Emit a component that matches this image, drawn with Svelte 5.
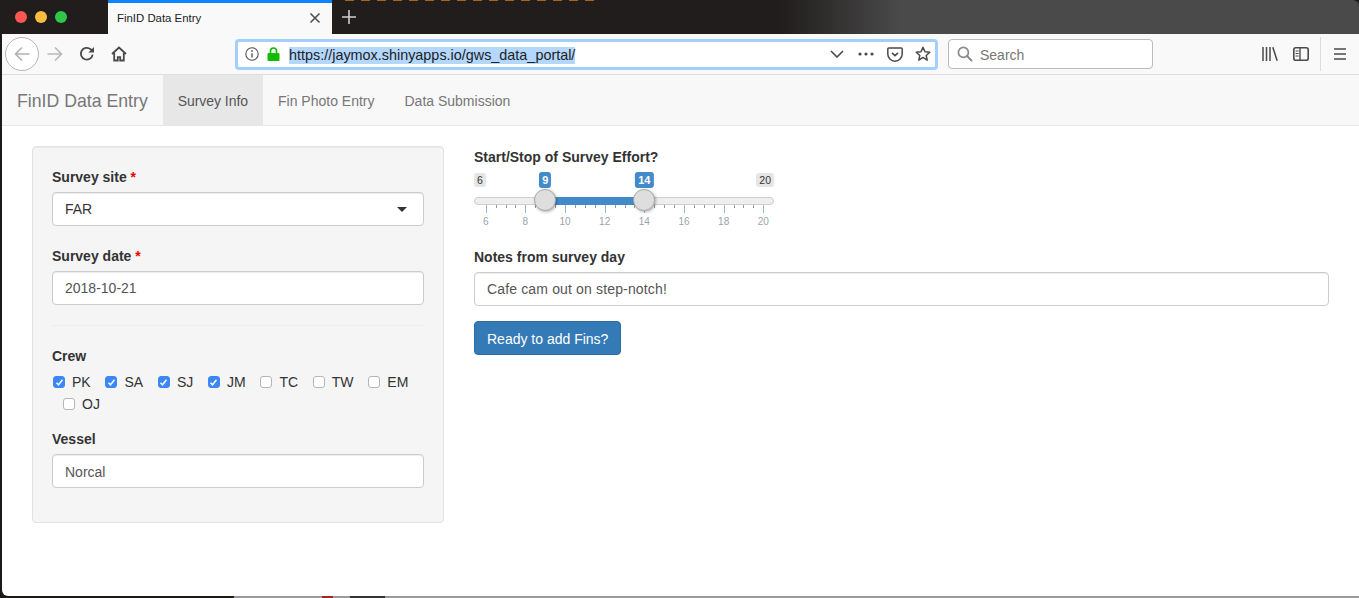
<script>
  const crew = [
    { id: 'PK', on: true },
    { id: 'SA', on: true },
    { id: 'SJ', on: true },
    { id: 'JM', on: true },
    { id: 'TC', on: false },
    { id: 'TW', on: false },
    { id: 'EM', on: false },
    { id: 'OJ', on: false }
  ]

  const nav = ['Survey Info', 'Fin Photo Entry', 'Data Submission']

  // slider scale, hours to px inside the 300px wide track
  const x = (v) => 11.7 + (v - 6) * 19.83
  const from = 9
  const to = 14

  const ticks = []
  for (let v = 6; v <= 20; v += 0.5) ticks.push(v)
  const majors = ticks.filter((v) => v % 2 === 0)
</script>

<div class="screen">
  <header class="titlebar">
    <div class="lights">
      <span class="light red"></span>
      <span class="light yellow"></span>
      <span class="light green"></span>
    </div>
    <div class="tab">
      <span class="tab-title">FinID Data Entry</span>
      <svg class="tab-close" width="12" height="12" viewBox="0 0 12 12"><path d="M1.5 1.5l9 9M10.5 1.5l-9 9" stroke="#4a4a4a" stroke-width="1.5" fill="none"/></svg>
    </div>
    <svg class="tab-new" width="14" height="14" viewBox="0 0 14 14"><path d="M7 0v14M0 7h14" stroke="#cfcfcf" stroke-width="1.6" fill="none"/></svg>
  </header>

  <div class="window">
    <div class="toolbar">
      <div class="back">
        <svg width="16" height="16" viewBox="0 0 16 16"><path d="M15.5 8H1.5M8 1.5L1.5 8 8 14.5" stroke="#b3b3b3" stroke-width="1.7" fill="none"/></svg>
      </div>
      <svg class="fwd" width="16" height="16" viewBox="0 0 16 16"><path d="M.5 8h14M8 1.5L14.5 8 8 14.5" stroke="#b9b9b9" stroke-width="1.7" fill="none"/></svg>
      <svg class="reload" width="16" height="16" viewBox="0 0 16 16"><path d="M13.6 8.6A5.9 5.9 0 1 1 11.6 3.2L14 5.2" stroke="#4a4a4a" stroke-width="1.8" fill="none"/><path d="M15 1v5.6H9.4z" fill="#4a4a4a"/></svg>
      <svg class="home" width="16" height="16" viewBox="0 0 16 16"><path d="M1 8l7-6.5L15 8M3.2 7v7.5h3.6v-3.4h2.4v3.4h3.6V7" stroke="#4a4a4a" stroke-width="1.8" fill="none"/></svg>

      <div class="urlbar">
        <svg class="info" width="14" height="14" viewBox="0 0 14 14"><circle cx="7" cy="7" r="6.2" stroke="#555" stroke-width="1.1" fill="none"/><path d="M7 6.2v4.2" stroke="#555" stroke-width="1.4"/><circle cx="7" cy="4" r=".9" fill="#555"/></svg>
        <svg class="lock" width="13" height="14" viewBox="0 0 13 14"><path d="M3.5 6V4a3 3 0 0 1 6 0v2" stroke="#12bc00" stroke-width="1.7" fill="none"/><rect x=".5" y="6" width="12" height="8" rx="1" fill="#12bc00"/></svg>
        <span class="url">https://jaymox.shinyapps.io/gws_data_portal/</span>
        <svg class="chev" width="14" height="8" viewBox="0 0 14 8"><path d="M1 1l6 6 6-6" stroke="#4a4a4a" stroke-width="1.6" fill="none"/></svg>
        <svg class="dots" width="16" height="4" viewBox="0 0 16 4"><circle cx="2" cy="2" r="1.6" fill="#4a4a4a"/><circle cx="8" cy="2" r="1.6" fill="#4a4a4a"/><circle cx="14" cy="2" r="1.6" fill="#4a4a4a"/></svg>
        <svg class="pocket" width="16" height="15" viewBox="0 0 16 15"><path d="M1.8 1h12.4a1 1 0 0 1 1 1v5a7.2 7.2 0 0 1-14.4 0V2a1 1 0 0 1 1-1z" stroke="#4a4a4a" stroke-width="1.5" fill="none"/><path d="M5 5.8l3 2.8 3-2.8" stroke="#4a4a4a" stroke-width="1.6" fill="none"/></svg>
        <svg class="star" width="16" height="16" viewBox="0 0 16 16"><path d="M8 1.4l2 4.4 4.8.5-3.6 3.2 1 4.7L8 11.4l-4.2 2.8 1-4.7L1.2 6.3 6 5.8z" stroke="#4a4a4a" stroke-width="1.5" stroke-linejoin="round" fill="none"/></svg>
      </div>

      <div class="searchbar">
        <svg width="16" height="16" viewBox="0 0 16 16"><circle cx="6.4" cy="6.4" r="5" stroke="#8a8a8a" stroke-width="1.7" fill="none"/><path d="M10 10l5 5" stroke="#8a8a8a" stroke-width="1.9"/></svg>
        <span class="search-text">Search</span>
      </div>

      <svg class="library" width="16" height="14" viewBox="0 0 16 14"><path d="M1 0v14M4.5 0v14M8 0v14M10.8.2l4.4 13.6" stroke="#4a4a4a" stroke-width="1.5" fill="none"/></svg>
      <svg class="sidebar" width="16" height="14" viewBox="0 0 16 14"><rect x=".8" y=".8" width="14.4" height="12.4" rx="2" stroke="#4a4a4a" stroke-width="1.6" fill="none"/><path d="M7 1v12" stroke="#4a4a4a" stroke-width="1.4"/><path d="M2.6 4h3M2.6 6.5h3M2.6 9h3" stroke="#4a4a4a" stroke-width="1"/></svg>
      <span class="divider"></span>
      <svg class="burger" width="12" height="12" viewBox="0 0 12 12"><path d="M0 1h12M0 6h12M0 11h12" stroke="#4a4a4a" stroke-width="1.5" fill="none"/></svg>
    </div>

    <nav class="navbar">
      <span class="brand">FinID Data Entry</span>
      {#each nav as item, i}
        <span class="nav-link" class:active={i === 0}>{item}</span>
      {/each}
    </nav>

    <main class="content">
      <section class="panel">
        <div class="group">
          <div class="label">Survey site <span class="req">*</span></div>
          <div class="select">FAR<span class="caret"></span></div>
        </div>
        <div class="group">
          <div class="label">Survey date <span class="req">*</span></div>
          <input class="control" value="2018-10-21" readonly />
        </div>
        <hr />
        <div class="group crew-group">
          <div class="label">Crew</div>
          <div class="checks">
            {#each crew as c}
              <label class="check">
                <span class="box" class:on={c.on}>
                  {#if c.on}
                    <svg width="9" height="9" viewBox="0 0 9 9"><path d="M1.5 4.8l2 2 4-5" stroke="#fff" stroke-width="1.5" fill="none"/></svg>
                  {/if}
                </span>
                {c.id}
              </label>
            {/each}
          </div>
        </div>
        <div class="group last">
          <div class="label">Vessel</div>
          <input class="control vessel" value="Norcal" readonly />
        </div>
      </section>

      <section class="main-col">
        <div class="label">Start/Stop of Survey Effort?</div>
        <div class="slider">
          <span class="badge minmax" style="left:0">6</span>
          <span class="badge minmax" style="right:0">20</span>
          <span class="badge value" style="left:{x(from)}px">{from}</span>
          <span class="badge value" style="left:{x(to)}px">{to}</span>
          <div class="track"></div>
          <div class="bar" style="left:{x(from)}px;width:{x(to) - x(from)}px"></div>
          {#each ticks as t}
            <span class="tick" class:major={t % 2 === 0} style="left:{x(t)}px"></span>
          {/each}
          {#each majors as m}
            <span class="tick-label" style="left:{x(m)}px">{m}</span>
          {/each}
          <span class="handle" style="left:{x(from)}px"></span>
          <span class="handle" style="left:{x(to)}px"></span>
        </div>
        <div class="label">Notes from survey day</div>
        <input class="control notes" value="Cafe cam out on step-notch!" readonly />
        <button class="btn">Ready to add Fins?</button>
      </section>
    </main>
  </div>

  <footer class="desk">
    <span class="desk-dark"></span>
    <span class="desk-red"></span>
    <span class="desk-text"></span>
  </footer>
</div>

<style>
  :global(body) {
    margin: 0;
    background: #1c1a19;
  }

  .screen {
    width: 1359px;
    height: 598px;
    display: flex;
    flex-direction: column;
    overflow: hidden;
    background: #1c1a19;
    font-family: "Liberation Sans", Arial, sans-serif;
    font-size: 14px;
    color: #333;
  }

  /* browser chrome */
  .titlebar {
    height: 34px;
    flex: none;
    display: flex;
    align-items: stretch;
    background:
      repeating-linear-gradient(90deg, #a8631c 0 9px, transparent 9px 16px) 345px 0 / 252px 1px no-repeat,
      linear-gradient(90deg, #201d1c 0, #201d1c 780px, #4a4a4a 900px, #4a4a4a 100%);
    border-top-right-radius: 6px;
  }
  .lights {
    width: 108px;
    display: flex;
    align-items: center;
    gap: 8px;
    padding-left: 15px;
    box-sizing: border-box;
  }
  .light {
    width: 12px;
    height: 12px;
    border-radius: 50%;
  }
  .red { background: #fc5753; }
  .yellow { background: #fdbc40; }
  .green { background: #2fc748; }
  .tab {
    width: 224px;
    background: #f9f9f9;
    border-top: 3px solid #0a84ff;
    box-sizing: border-box;
    display: flex;
    align-items: center;
    padding: 0 11px 2px 9px;
    justify-content: space-between;
  }
  .tab-title {
    font-size: 11.4px;
    color: #222;
  }
  .tab-new {
    margin: 10px 0 0 10px;
  }

  .window {
    flex: 1;
    margin-left: 2px;
    background: #fff;
    border-bottom-left-radius: 6px;
    display: flex;
    flex-direction: column;
    min-height: 0;
  }
  .toolbar {
    height: 41px;
    flex: none;
    box-sizing: border-box;
    background: #f9f9f9;
    border-bottom: 1px solid #dedede;
    display: flex;
    align-items: center;
    padding-left: 3px;
  }
  .back {
    width: 34px;
    height: 34px;
    box-sizing: border-box;
    border: 1px solid #b5b5b5;
    border-radius: 50%;
    background: #fff;
    display: flex;
    align-items: center;
    justify-content: center;
    flex: none;
  }
  .toolbar > svg { flex: none; }
  .fwd { margin-left: 8px; }
  .reload { margin-left: 16px; }
  .home { margin-left: 16px; }
  .urlbar {
    margin-left: 108px;
    width: 703px;
    height: 31px;
    box-sizing: border-box;
    border: 3px solid #a3cfff;
    border-radius: 4px;
    background: #fff;
    display: flex;
    align-items: center;
    padding-left: 7px;
    flex: none;
  }
  .lock { margin-left: 8px; }
  .url {
    margin: 2px 0 0 9px;
    font-size: 14.4px;
    line-height: 17px;
    color: #222;
    background: #b3d7ff;
  }
  .chev { margin-left: auto; }
  .dots { margin-left: 14px; }
  .pocket { margin-left: 13px; }
  .star { margin: 0 4px 0 12px; }
  .searchbar {
    margin-left: 10px;
    width: 205px;
    height: 30px;
    box-sizing: border-box;
    border: 1px solid #bcbcbc;
    border-radius: 4px;
    background: #fff;
    display: flex;
    align-items: center;
    gap: 7px;
    padding-left: 8px;
    color: #777;
    flex: none;
  }
  .search-text { padding-top: 2px; }
  .library { margin-left: 109px; }
  .sidebar { margin-left: 15px; }
  .divider {
    margin-left: 11px;
    width: 1px;
    height: 34px;
    background: #dcdcdc;
    flex: none;
  }
  .burger { margin-left: 13px; }

  /* bootstrap-ish page */
  .navbar {
    height: 51px;
    flex: none;
    box-sizing: border-box;
    background: #f8f8f8;
    border-bottom: 1px solid #e7e7e7;
    display: flex;
    align-items: stretch;
    padding-left: 15px;
  }
  .brand {
    font-size: 17.7px;
    color: #777;
    line-height: 52px;
    margin-right: 15px;
  }
  .nav-link {
    color: #777;
    padding: 0 15px;
    line-height: 52px;
  }
  .nav-link.active {
    background: #e7e7e7;
    color: #555;
    letter-spacing: -.05px;
  }

  .content {
    display: flex;
    padding: 20px 30px 0 30px;
    gap: 30px;
    align-items: flex-start;
  }
  .panel {
    width: 412px;
    flex: none;
    box-sizing: border-box;
    padding: 20px 19px 19px;
    background: #f5f5f5;
    border: 1px solid #e3e3e3;
    border-radius: 4px;
    box-shadow: inset 0 1px 1px rgba(0, 0, 0, .05);
  }
  .group { margin-bottom: 20px; }
  .group.crew-group { margin-bottom: 15px; }
  .group.last { margin-bottom: 15px; }
  .label {
    font-weight: bold;
    line-height: 20px;
    margin-bottom: 5px;
    color: #333;
  }
  .req { color: #e00; }
  .control, .select {
    display: block;
    width: 100%;
    height: 34px;
    box-sizing: border-box;
    padding: 6px 12px;
    font: 14px/20px "Liberation Sans", Arial, sans-serif;
    color: #555;
    background: #fff;
    border: 1px solid #ccc;
    border-radius: 4px;
    box-shadow: inset 0 1px 1px rgba(0, 0, 0, .075);
    outline: none;
  }
  .vessel { padding: 7px 12px 5px; }
  .select {
    display: flex;
    align-items: center;
    justify-content: space-between;
    padding-right: 16px;
    color: #333;
  }
  .caret {
    width: 0;
    height: 0;
    border-left: 5px solid transparent;
    border-right: 5px solid transparent;
    border-top: 5px solid #333;
  }
  hr {
    border: 0;
    border-top: 1px solid #eee;
    margin: 0 0 20px;
  }
  .checks {
    display: flex;
    flex-wrap: wrap;
    column-gap: 3.75px;
    row-gap: 2px;
    margin-top: 6px;
  }
  .check {
    display: flex;
    align-items: center;
    line-height: 20px;
    margin-left: 10px;
  }
  .check:first-child { margin-left: 0; }
  .box {
    width: 12px;
    height: 12px;
    margin: 0 7px 0 1px;
    box-sizing: border-box;
    border: 1px solid #b5b5b5;
    border-radius: 3px;
    background: #fff;
    display: flex;
    align-items: center;
    justify-content: center;
  }
  .box.on {
    background: #3b87f5;
    border-color: #3b87f5;
  }

  .main-col {
    flex: 1;
    min-width: 0;
    padding-top: 1px;
  }
  .slider {
    position: relative;
    width: 300px;
    height: 60px;
    margin-bottom: 15px;
  }
  .badge {
    position: absolute;
    padding: 1px 3px;
    border-radius: 3px;
  }
  .badge.minmax {
    top: 1px;
    line-height: 12px;
    font-size: 10.5px;
    background: #e6e6e6;
    color: #333;
  }
  .badge.value {
    top: 0;
    line-height: 14px;
    background: #428bca;
    color: #fff;
    font-weight: bold;
    font-size: 11px;
    transform: translateX(-50%);
  }
  .track {
    position: absolute;
    top: 25px;
    left: 0;
    width: 100%;
    height: 8px;
    box-sizing: border-box;
    background: #eee;
    border: 1px solid #cfcfcf;
    border-radius: 5px;
  }
  .bar {
    position: absolute;
    top: 25px;
    height: 8px;
    background: #428bca;
  }
  .handle {
    position: absolute;
    top: 17px;
    width: 22px;
    height: 22px;
    margin-left: -11px;
    box-sizing: border-box;
    background: #dedede;
    border: 1px solid #aaa;
    border-radius: 50%;
    box-shadow: 1px 1px 3px rgba(0, 0, 0, .3);
  }
  .tick {
    position: absolute;
    top: 33px;
    width: 1px;
    height: 3px;
    background: #999;
  }
  .tick.major {
    height: 8px;
    background: #8fbae0;
  }
  .tick-label {
    position: absolute;
    top: 44px;
    line-height: 12px;
    font-size: 10px;
    color: #9aa3ad;
    transform: translateX(-50%);
  }
  .notes {
    margin-bottom: 15px;
    letter-spacing: .15px;
  }
  .btn {
    height: 34px;
    padding: 7px 12px 5px;
    box-sizing: border-box;
    font: 14px/20px "Liberation Sans", Arial, sans-serif;
    color: #fff;
    background: #337ab7;
    border: 1px solid #2e6da4;
    border-radius: 4px;
  }

  /* sliver of the desktop under the window */
  .desk {
    height: 2px;
    flex: none;
    background: #9a9a9a;
    display: flex;
  }
  .desk-dark {
    width: 234px;
    background: #1c1a19;
  }
  .desk-red {
    width: 11px;
    margin-left: 88px;
    background: #a02a20;
  }
  .desk-text {
    width: 35px;
    margin-left: 17px;
    background: #333;
  }
</style>
